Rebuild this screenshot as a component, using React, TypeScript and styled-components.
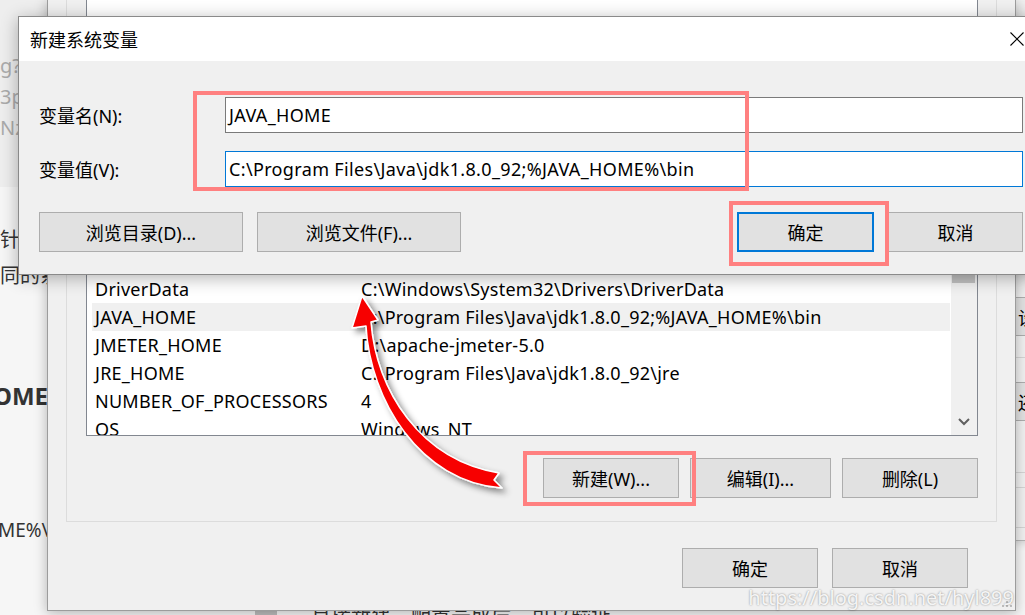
import React from 'react';
import styled, { createGlobalStyle } from 'styled-components';

const UI_FONT = `"Noto Sans", "Noto Sans CJK SC", sans-serif`;

const GlobalStyle = createGlobalStyle`
  html,
  body {
    margin: 0;
    padding: 0;
  }
  body {
    background: #f6f6f6;
    font-family: ${UI_FONT};
  }
`;

const Screen = styled.div`
  position: relative;
  width: 1025px;
  height: 615px;
  overflow: hidden;
  background: #f6f6f6;
`;

// --- blog page lying behind the dialogs ---
const Article = styled.div`
  display: flex;
  flex-direction: column;
  font-family: ${UI_FONT};
  color: #333;
`;

const CodeBlock = styled.div`
  height: 187px;
  box-sizing: border-box;
  padding-top: 50px;
  background: #eeeeee;
  color: #ababab;
  font-size: 20px;
  line-height: 31px;
  white-space: nowrap;
`;

const TextLine = styled.div<{ $top: number; $size?: number; $bold?: boolean; $shift?: number }>`
  margin-top: ${({ $top }) => $top}px;
  margin-left: ${({ $shift = 0 }) => $shift}px;
  font-size: ${({ $size = 20 }) => $size}px;
  font-weight: ${({ $bold }) => ($bold ? 700 : 400)};
  line-height: 36px;
  white-space: nowrap;
`;

const BulletBar = styled.span`
  display: inline-block;
  width: 22px;
  height: 14px;
  margin-right: 34px;
  vertical-align: middle;
  background: #bdbdbd;
`;

// --- settings window on the far right, mostly hidden ---
const BackWindow = styled.div`
  position: absolute;
  left: 860px;
  top: -1px;
  width: 420px;
  height: 542px;
  box-sizing: border-box;
  display: flex;
  flex-direction: column;
  padding: 297px 0 0 152px;
  border: 1px solid #b5b5b5;
  background: #f0f0f0;
  box-shadow: 0 0 10px rgba(0, 0, 0, 0.2);
  font-family: ${UI_FONT};
  font-size: 18px;
`;

const BackButton = styled.div<{ $top: number }>`
  width: 130px;
  height: 39px;
  margin-top: ${({ $top }) => $top}px;
  box-sizing: border-box;
  display: flex;
  align-items: center;
  padding-left: 4px;
  border: 1px solid #adadad;
  background: #e1e1e1;
`;

const BackRule = styled.div<{ $top: number }>`
  height: 1px;
  margin-top: ${({ $top }) => $top}px;
  background: #d4d4d4;
`;

// --- environment variables window ---
const EnvWindow = styled.div`
  position: absolute;
  left: 47px;
  top: 0;
  width: 969px;
  height: 611px;
  box-sizing: border-box;
  display: flex;
  flex-direction: column;
  border: 1px solid #9c9c9c;
  border-top: none;
  background: #f0f0f0;
  box-shadow: 0 2px 12px rgba(0, 0, 0, 0.28);
  font-family: ${UI_FONT};
  font-size: 18px;
  color: #000;
`;

const UserGroup = styled.div`
  height: 150px;
  margin: 0 18px;
  padding: 0 18px 0 19px;
  box-sizing: border-box;
  border: 1px solid #dcdcdc;
  border-top: none;
`;

const UserList = styled.div`
  height: 100px;
  border: 1px solid #828790;
  border-top: none;
  background: #fff;
`;

const SystemGroup = styled.div`
  display: flex;
  flex-direction: column;
  margin: 56px 18px 0;
  padding: 39px 18px 23px 19px;
  border: 1px solid #dcdcdc;
`;

const VarList = styled.div`
  display: flex;
  height: 190px;
  box-sizing: border-box;
  border: 1px solid #828790;
  background: #fff;
`;

const ListBody = styled.div`
  flex: 1;
  overflow: hidden;
`;

const Row = styled.div<{ $selected?: boolean }>`
  display: flex;
  align-items: center;
  height: 28px;
  margin: 0 1px 0 5px;
  padding-left: 3px;
  background: ${({ $selected }) => ($selected ? '#f0f0f0' : 'transparent')};
  letter-spacing: 0.25px;
  white-space: nowrap;
`;

const NameCell = styled.span`
  width: 266px;
  flex-shrink: 0;
`;

const Scrollbar = styled.div`
  display: flex;
  flex-direction: column;
  width: 26px;
  background: #f0f0f0;
`;

const ScrollUp = styled.div`
  height: 17px;
`;

const Thumb = styled.div`
  height: 19px;
  margin: 0 2px 0 1px;
  background: #c1c1c1;
`;

const Track = styled.div`
  flex: 1;
`;

const ScrollDown = styled.div`
  display: flex;
  align-items: center;
  justify-content: center;
  height: 26px;
`;

const ButtonRow = styled.div<{ $top: number; $gap: number; $right?: number }>`
  display: flex;
  justify-content: flex-end;
  gap: ${({ $gap }) => $gap}px;
  margin-top: ${({ $top }) => $top}px;
  padding-right: ${({ $right = 0 }) => $right}px;
`;

const WinButton = styled.button<{ $w: number; $primary?: boolean }>`
  width: ${({ $w }) => $w}px;
  height: 40px;
  box-sizing: border-box;
  padding: 0;
  border: ${({ $primary }) => ($primary ? '2px solid #0078d7' : '1px solid #adadad')};
  background: #e1e1e1;
  font-family: ${UI_FONT};
  font-size: 18px;
  color: #000;
`;

const Grip = styled.svg`
  position: absolute;
  right: 2px;
  bottom: 2px;
`;

// --- "new system variable" dialog on top ---
const NewVarDialog = styled.div`
  position: absolute;
  left: 18px;
  top: 16px;
  width: 1021px;
  height: 259px;
  box-sizing: border-box;
  display: flex;
  flex-direction: column;
  border: 1px solid #8a8a8a;
  background: #f0f0f0;
  box-shadow: 0 3px 16px rgba(0, 0, 0, 0.3);
  font-family: ${UI_FONT};
  font-size: 18px;
  color: #000;
`;

const TitleBar = styled.div`
  display: flex;
  align-items: center;
  justify-content: space-between;
  height: 44px;
  padding: 0 14px 0 11px;
  background: #fff;
  font-size: 18px;
`;

const DialogBody = styled.div`
  display: flex;
  flex-direction: column;
  gap: 18px;
  padding: 36px 15px 22px 20px;
`;

const Field = styled.div`
  display: flex;
  align-items: center;
`;

const FieldLabel = styled.label`
  width: 186px;
  flex-shrink: 0;
`;

const TextBox = styled.div<{ $focused?: boolean }>`
  flex: 1;
  height: 36px;
  box-sizing: border-box;
  display: flex;
  align-items: center;
  padding-left: 3px;
  border: 1px solid ${({ $focused }) => ($focused ? '#0078d7' : '#7a7a7a')};
  background: #fff;
  letter-spacing: 0.35px;
  white-space: nowrap;
`;

const DialogActions = styled.div`
  display: flex;
  justify-content: space-between;
  margin-top: 7px;
`;

const ActionGroup = styled.div`
  display: flex;
  gap: 14px;
`;

// --- annotations drawn over the screenshot ---
const Highlight = styled.div<{ $x: number; $y: number; $w: number; $h: number }>`
  position: absolute;
  left: ${({ $x }) => $x}px;
  top: ${({ $y }) => $y}px;
  width: ${({ $w }) => $w}px;
  height: ${({ $h }) => $h}px;
  box-sizing: border-box;
  border: 4px solid #ff8080;
  pointer-events: none;
`;

const ArrowLayer = styled.svg`
  position: absolute;
  left: 0;
  top: 0;
  pointer-events: none;
`;

const Watermark = styled.div`
  position: absolute;
  right: 11px;
  top: 584px;
  font-family: ${UI_FONT};
  font-size: 20px;
  color: rgba(255, 255, 255, 0.9);
  text-shadow: 0 0 2px rgba(0, 0, 0, 0.45);
  pointer-events: none;
`;

const systemVars: [string, string][] = [
  ['ComSpec', 'C:\\Windows\\system32\\cmd.exe'],
  ['DriverData', 'C:\\Windows\\System32\\Drivers\\DriverData'],
  ['JAVA_HOME', 'C:\\Program Files\\Java\\jdk1.8.0_92;%JAVA_HOME%\\bin'],
  ['JMETER_HOME', 'D:\\apache-jmeter-5.0'],
  ['JRE_HOME', 'C:\\Program Files\\Java\\jdk1.8.0_92\\jre'],
  ['NUMBER_OF_PROCESSORS', '4'],
  ['OS', 'Windows_NT'],
];

function App(): JSX.Element {
  return (
    <Screen>
      <GlobalStyle />

      <Article>
        <CodeBlock>
          <div>g?x-oss-process=image/watermark</div>
          <div>3pZy9ibG9nLmNzZG4ubmV0L2h5bDg5OQ</div>
          <div>Nz,size_16,color_FFFFFF,t_70</div>
        </CodeBlock>
        <TextLine $top={35}>针对不同的系统环境变量进行配置</TextLine>
        <TextLine $top={0}>同的系统变量</TextLine>
        <TextLine $top={84} $size={24} $bold $shift={-7}>OME</TextLine>
        <TextLine $top={98} $size={19} $shift={-2}>ME%\bin</TextLine>
        <TextLine $top={49} $shift={255}>
          <BulletBar />
          直接新建，配置完成后，可以验证
        </TextLine>
      </Article>

      <BackWindow>
        <BackButton $top={0}>设置(T)...</BackButton>
        <BackRule $top={21} />
        <BackButton $top={24}>还原(R)</BackButton>
        <BackRule $top={51} />
        <BackRule $top={14} />
        <BackRule $top={39} />
      </BackWindow>

      <EnvWindow>
        <UserGroup>
          <UserList />
        </UserGroup>
        <SystemGroup>
          <VarList>
            <ListBody>
              {systemVars.map(([name, value]) => (
                <Row key={name} $selected={name === 'JAVA_HOME'}>
                  <NameCell>{name}</NameCell>
                  <span>{value}</span>
                </Row>
              ))}
            </ListBody>
            <Scrollbar>
              <ScrollUp />
              <Thumb />
              <Track />
              <ScrollDown>
                <svg width="12" height="8" viewBox="0 0 12 8">
                  <polyline points="1,1 6,6 11,1" fill="none" stroke="#606060" strokeWidth="2" />
                </svg>
              </ScrollDown>
            </Scrollbar>
          </VarList>
          <ButtonRow $top={22} $gap={11}>
            <WinButton $w={136}>新建(W)...</WinButton>
            <WinButton $w={141}>编辑(I)...</WinButton>
            <WinButton $w={136}>删除(L)</WinButton>
          </ButtonRow>
        </SystemGroup>
        <ButtonRow $top={26} $gap={14} $right={47}>
          <WinButton $w={136}>确定</WinButton>
          <WinButton $w={136}>取消</WinButton>
        </ButtonRow>
        <Grip width="12" height="12" viewBox="0 0 12 12">
          {[
            [9, 1],
            [9, 5],
            [5, 5],
            [9, 9],
            [5, 9],
            [1, 9],
          ].map(([x, y]) => (
            <rect key={`${x}-${y}`} x={x} y={y} width="2" height="2" fill="#bcbcbc" />
          ))}
        </Grip>
      </EnvWindow>

      <NewVarDialog>
        <TitleBar>
          <span>新建系统变量</span>
          <svg width="14" height="14" viewBox="0 0 14 14">
            <path d="M0.5 0.5 L13.5 13.5 M13.5 0.5 L0.5 13.5" stroke="#000" strokeWidth="1.1" />
          </svg>
        </TitleBar>
        <DialogBody>
          <Field>
            <FieldLabel>变量名(N):</FieldLabel>
            <TextBox>JAVA_HOME</TextBox>
          </Field>
          <Field>
            <FieldLabel>变量值(V):</FieldLabel>
            <TextBox $focused>C:\Program Files\Java\jdk1.8.0_92;%JAVA_HOME%\bin</TextBox>
          </Field>
          <DialogActions>
            <ActionGroup>
              <WinButton $w={204}>浏览目录(D)...</WinButton>
              <WinButton $w={204}>浏览文件(F)...</WinButton>
            </ActionGroup>
            <ActionGroup>
              <WinButton $w={137} $primary>确定</WinButton>
              <WinButton $w={135}>取消</WinButton>
            </ActionGroup>
          </DialogActions>
        </DialogBody>
      </NewVarDialog>

      <Highlight $x={193} $y={91} $w={556} $h={100} />
      <Highlight $x={729} $y={201} $w={160} $h={65} />
      <Highlight $x={523} $y={451} $w={173} $h={55} />

      <ArrowLayer width="1025" height="615" viewBox="0 0 1025 615">
        <defs>
          <filter id="arrowShadow" x="-30%" y="-30%" width="160%" height="160%">
            <feDropShadow dx="4" dy="4" stdDeviation="3" floodColor="#000" floodOpacity="0.45" />
          </filter>
        </defs>
        <path
          d="M362 296 L378 320 L371 322 C376 390 420 460 499 473 L494 480 L502 488 C420 482 370 400 366 326 L352 328 Z"
          fill="#f70000"
          stroke="#fff"
          strokeWidth="1.5"
          strokeLinejoin="round"
          filter="url(#arrowShadow)"
        />
      </ArrowLayer>

      <Watermark>https://blog.csdn.net/hyl899</Watermark>
    </Screen>
  );
}

export default App;
